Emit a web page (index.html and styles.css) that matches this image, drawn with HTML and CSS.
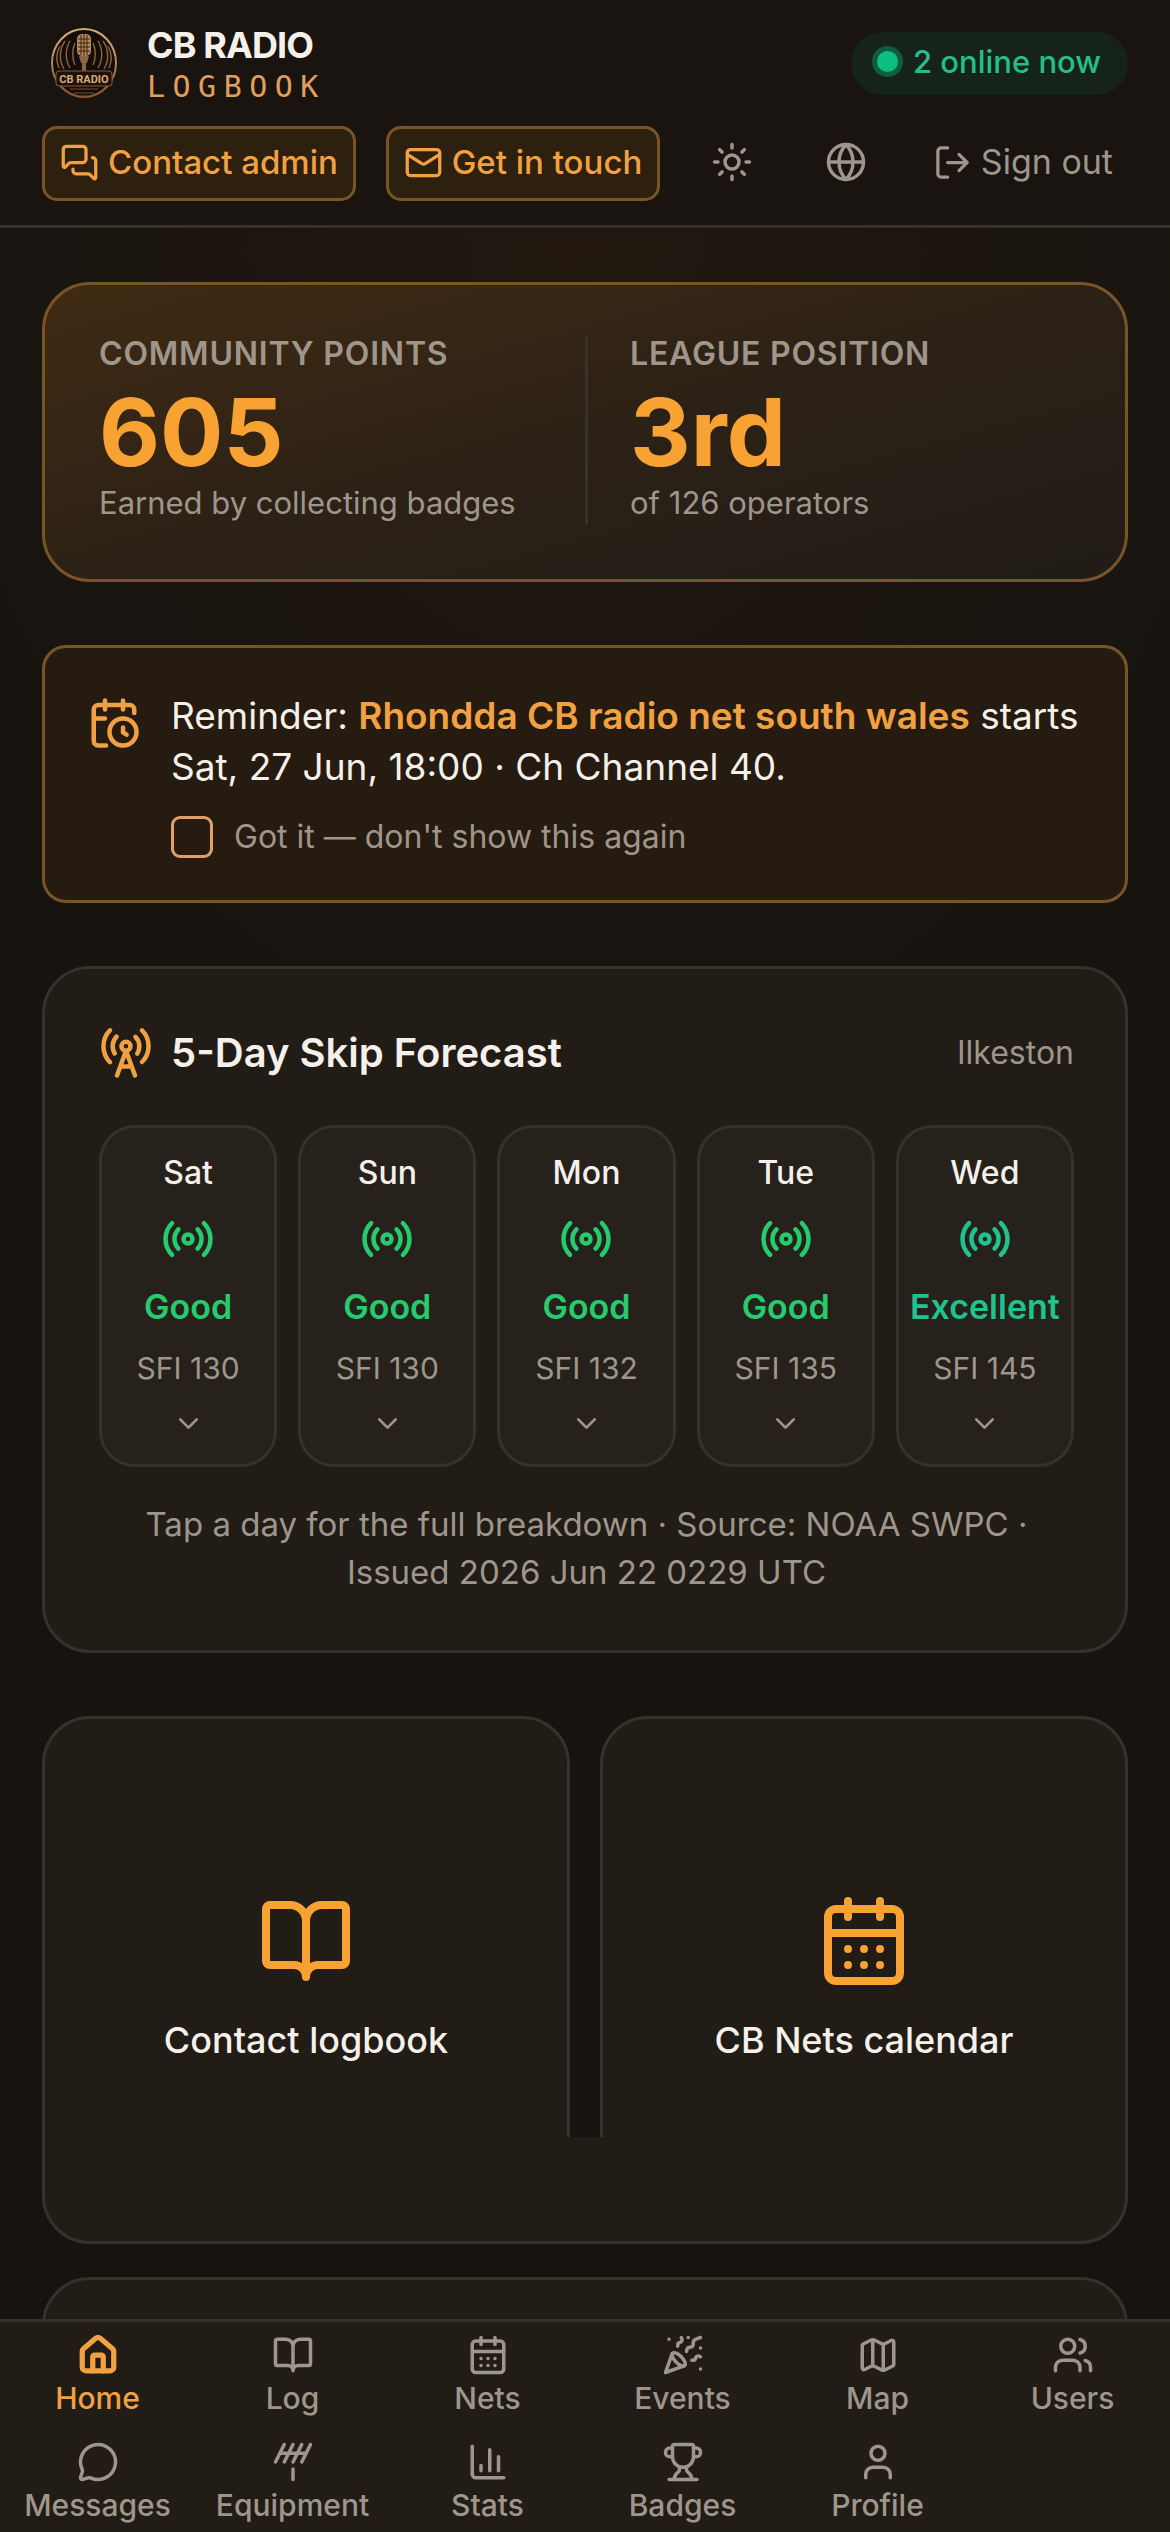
FILE: index.html
```html
<!DOCTYPE html>
<html lang="en">
<head>
    <meta charset="UTF-8">
    <meta name="viewport" content="width=device-width, initial-scale=1">
    <title>CB Radio Logbook</title>
    <link rel="stylesheet" href="styles.css">
</head>
<body>
<!-- icon set -->
<svg class="sprite" aria-hidden="true">
    <symbol id="i-chats" viewBox="0 0 24 24"><path d="M16 10a2 2 0 0 1-2 2H6.828a2 2 0 0 0-1.414.586l-2.202 2.202A.71.71 0 0 1 2 14.286V4a2 2 0 0 1 2-2h10a2 2 0 0 1 2 2z"/><path d="M20 9a2 2 0 0 1 2 2v10.286a.71.71 0 0 1-1.212.502l-2.202-2.202A2 2 0 0 0 17.172 19H10a2 2 0 0 1-2-2v-1"/></symbol>
    <symbol id="i-mail" viewBox="0 0 24 24"><rect x="2" y="4" width="20" height="16" rx="2"/><path d="m22 7-8.991 5.727a2 2 0 0 1-2.009 0L2 7"/></symbol>
    <symbol id="i-sun" viewBox="0 0 24 24"><circle cx="12" cy="12" r="4"/><path d="M12 2v2M12 20v2M4.93 4.93l1.41 1.41M17.66 17.66l1.41 1.41M2 12h2M20 12h2M6.34 17.66l-1.41 1.41M19.07 4.93l-1.41 1.41"/></symbol>
    <symbol id="i-globe" viewBox="0 0 24 24"><circle cx="12" cy="12" r="10"/><path d="M12 2a14.5 14.5 0 0 0 0 20 14.5 14.5 0 0 0 0-20M2 12h20"/></symbol>
    <symbol id="i-logout" viewBox="0 0 24 24"><path d="m16 17 5-5-5-5M21 12H9M9 21H5a2 2 0 0 1-2-2V5a2 2 0 0 1 2-2h4"/></symbol>
    <symbol id="i-reminder" viewBox="0 0 24 24"><path d="M16 14v2.2l1.6 1M16 2v4M21 7.5V6a2 2 0 0 0-2-2H5a2 2 0 0 0-2 2v14a2 2 0 0 0 2 2h3.5M3 10h5M8 2v4"/><circle cx="16" cy="16" r="6"/></symbol>
    <symbol id="i-tower" viewBox="0 0 24 24"><path d="M4.9 16.1C1 12.2 1 5.8 4.9 1.9M7.8 4.7a6.14 6.14 0 0 0-.8 7.5M16.2 4.8c2 2 2.26 5.11.8 7.47M19.1 1.9a9.96 9.96 0 0 1 0 14.1M9.5 18h5M8 22l4-11 4 11"/><circle cx="12" cy="9" r="2"/></symbol>
    <symbol id="i-signal" viewBox="0 0 24 24"><path d="M16.247 7.761a6 6 0 0 1 0 8.478M19.075 4.933a10 10 0 0 1 0 14.134M4.925 19.067a10 10 0 0 1 0-14.134M7.753 16.239a6 6 0 0 1 0-8.478"/><circle cx="12" cy="12" r="2"/></symbol>
    <symbol id="i-down" viewBox="0 0 24 24"><path d="m6 9 6 6 6-6"/></symbol>
    <symbol id="i-book" viewBox="0 0 24 24"><path d="M12 7v14M3 18a1 1 0 0 1-1-1V4a1 1 0 0 1 1-1h5a4 4 0 0 1 4 4 4 4 0 0 1 4-4h5a1 1 0 0 1 1 1v13a1 1 0 0 1-1 1h-6a3 3 0 0 0-3 3 3 3 0 0 0-3-3z"/></symbol>
    <symbol id="i-calendar" viewBox="0 0 24 24"><rect x="3" y="4" width="18" height="18" rx="2"/><path d="M8 2v4M16 2v4M3 10h18M8 14h.01M12 14h.01M16 14h.01M8 18h.01M12 18h.01M16 18h.01"/></symbol>
    <symbol id="i-home" viewBox="0 0 24 24"><path d="M15 21v-8a1 1 0 0 0-1-1h-4a1 1 0 0 0-1 1v8"/><path d="M3 10a2 2 0 0 1 .709-1.528l7-5.999a2 2 0 0 1 2.582 0l7 5.999A2 2 0 0 1 21 10v9a2 2 0 0 1-2 2H5a2 2 0 0 1-2-2z"/></symbol>
    <symbol id="i-party" viewBox="0 0 24 24"><path d="M5.8 11.3 2 22l10.7-3.79M4 3h.01M22 8h.01M15 2h.01M22 20h.01"/><path d="m22 2-2.24.75a2.9 2.9 0 0 0-1.96 3.12c.1.86-.57 1.63-1.45 1.63h-.38c-.86 0-1.6.6-1.76 1.44L14 10"/><path d="m22 13-.82-.33c-.86-.34-1.82.2-1.98 1.11c-.11.7-.72 1.22-1.43 1.22H17"/><path d="m11 2 .33.82c.34.86-.2 1.82-1.11 1.98C9.52 4.9 9 5.52 9 6.23V7"/><path d="M11 13c1.93 1.93 2.83 4.17 2 5-.83.83-3.07-.07-5-2-1.93-1.93-2.83-4.17-2-5 .83-.83 3.07.07 5 2Z"/></symbol>
    <symbol id="i-map" viewBox="0 0 24 24"><path d="M14.106 5.553a2 2 0 0 0 1.788 0l3.659-1.83A1 1 0 0 1 21 4.619v12.764a1 1 0 0 1-.553.894l-4.553 2.277a2 2 0 0 1-1.788 0l-4.212-2.106a2 2 0 0 0-1.788 0l-3.659 1.83A1 1 0 0 1 3 19.381V6.618a1 1 0 0 1 .553-.894l4.553-2.277a2 2 0 0 1 1.788 0zM15 5.764v15M9 3.236v15"/></symbol>
    <symbol id="i-users" viewBox="0 0 24 24"><path d="M16 21v-2a4 4 0 0 0-4-4H6a4 4 0 0 0-4 4v2M16 3.128a4 4 0 0 1 0 7.744M22 21v-2a4 4 0 0 0-3-3.87"/><circle cx="9" cy="7" r="4"/></symbol>
    <symbol id="i-message" viewBox="0 0 24 24"><path d="M2.992 16.342a2 2 0 0 1 .094 1.167l-1.065 3.29a1 1 0 0 0 1.236 1.168l3.413-.998a2 2 0 0 1 1.099.092 10 10 0 1 0-4.777-4.719"/></symbol>
    <symbol id="i-antenna" viewBox="0 0 24 24"><path d="M2 12 7 2M7 12l5-10M12 12l5-10M17 12l5-10M4.5 7h15M12 16v6"/></symbol>
    <symbol id="i-stats" viewBox="0 0 24 24"><path d="M3 3v16a2 2 0 0 0 2 2h16M18 17V9M13 17V5M8 17v-3"/></symbol>
    <symbol id="i-trophy" viewBox="0 0 24 24"><path d="M10 14.66v1.626a2 2 0 0 1-.976 1.696A5 5 0 0 0 7 21.978M14 14.66v1.626a2 2 0 0 0 .976 1.696A5 5 0 0 1 17 21.978M18 9h1.5a1 1 0 0 0 0-5H18M4 22h16M6 9a6 6 0 0 0 12 0V3a1 1 0 0 0-1-1H7a1 1 0 0 0-1 1zM6 9H4.5a1 1 0 0 1 0-5H6"/></symbol>
    <symbol id="i-user" viewBox="0 0 24 24"><path d="M19 21v-2a4 4 0 0 0-4-4H9a4 4 0 0 0-4 4v2"/><circle cx="12" cy="7" r="4"/></symbol>
</svg>

<div class="app">
    <header class="header">
        <div class="header-top">
            <a class="brand" href="#">
                <svg class="logo" viewBox="0 0 84 84" aria-hidden="true">
                    <defs>
                        <linearGradient id="copper" x1="0" y1="0" x2="0" y2="1">
                            <stop offset="0" stop-color="#d6b07c"/>
                            <stop offset="1" stop-color="#8a5636"/>
                        </linearGradient>
                    </defs>
                    <ellipse cx="42" cy="42" rx="32" ry="34" fill="#140e0a" stroke="url(#copper)" stroke-width="2"/>
                    <g fill="none" stroke="#8f6440" stroke-width="1.4">
                        <path d="M33 22c-3 6-3 16 0 22M28 20c-5 8-5 19 0 27M23 20c-6 8-6 20-1 28M18 25c-4 7-4 15-1 22"/>
                        <path d="M51 22c3 6 3 16 0 22M56 20c5 8 5 19 0 27M61 20c6 8 6 20 1 28M66 25c4 7 4 15 1 22"/>
                    </g>
                    <rect x="35" y="13" width="14" height="22" rx="5" fill="#b58a5e"/>
                    <path d="M36 18h12M36 22h12M36 26h12M36 30h12M39 14v20M42 13v22M45 14v20" stroke="#3a2415" stroke-width="1"/>
                    <path d="M37 35h10l-2 7h-1v8h-4v-8h-1z" fill="#8f6440"/>
                    <rect x="14" y="50" width="56" height="15" rx="3" fill="#1d120b" stroke="#8a5636"/>
                    <text class="logo-text" x="42" y="62">CB RADIO</text>
                    <path d="M28 68h28M32 72h20M39 75h6" stroke="#7d4c30" stroke-width="1.2"/>
                </svg>
                <span class="brand-name">
                    <span class="brand-title">CB RADIO</span>
                    <span class="brand-sub">LOGBOOK</span>
                </span>
            </a>
            <a class="online" href="#"><span class="dot"></span>2 online now</a>
        </div>
        <div class="header-actions">
            <button class="btn btn-outline" type="button"><svg class="icon"><use href="#i-chats"/></svg>Contact admin</button>
            <button class="btn btn-outline" type="button"><svg class="icon"><use href="#i-mail"/></svg>Get in touch</button>
            <button class="btn btn-icon" type="button" aria-label="Theme"><svg class="icon"><use href="#i-sun"/></svg></button>
            <button class="btn btn-icon" type="button" aria-label="Language"><svg class="icon"><use href="#i-globe"/></svg></button>
            <button class="btn" type="button"><svg class="icon"><use href="#i-logout"/></svg>Sign out</button>
        </div>
    </header>

    <main class="main">
        <section class="points">
            <div class="stat">
                <h2 class="stat-label">Community points</h2>
                <p class="stat-value">605</p>
                <p class="stat-note">Earned by collecting badges</p>
            </div>
            <div class="stat">
                <h2 class="stat-label">League position</h2>
                <p class="stat-value">3rd</p>
                <p class="stat-note">of 126 operators</p>
            </div>
        </section>

        <section class="reminder">
            <svg class="icon"><use href="#i-reminder"/></svg>
            <div class="reminder-body">
                <p class="reminder-text">Reminder: <strong>Rhondda CB radio net south wales</strong> starts Sat, 27 Jun, 18:00 · Ch Channel 40.</p>
                <label class="dismiss"><input type="checkbox"> Got it — don't show this again</label>
            </div>
        </section>

        <section class="card forecast">
            <div class="forecast-head">
                <svg class="icon"><use href="#i-tower"/></svg>
                <h2 class="forecast-title">5-Day Skip Forecast</h2>
                <span class="forecast-place">Ilkeston</span>
            </div>
            <div class="days">
                <button class="day good" type="button">
                    <span class="day-name">Sat</span>
                    <svg class="icon"><use href="#i-signal"/></svg>
                    <span class="day-rating">Good</span>
                    <span class="day-sfi">SFI 130</span>
                    <svg class="icon more"><use href="#i-down"/></svg>
                </button>
                <button class="day good" type="button">
                    <span class="day-name">Sun</span>
                    <svg class="icon"><use href="#i-signal"/></svg>
                    <span class="day-rating">Good</span>
                    <span class="day-sfi">SFI 130</span>
                    <svg class="icon more"><use href="#i-down"/></svg>
                </button>
                <button class="day good" type="button">
                    <span class="day-name">Mon</span>
                    <svg class="icon"><use href="#i-signal"/></svg>
                    <span class="day-rating">Good</span>
                    <span class="day-sfi">SFI 132</span>
                    <svg class="icon more"><use href="#i-down"/></svg>
                </button>
                <button class="day good" type="button">
                    <span class="day-name">Tue</span>
                    <svg class="icon"><use href="#i-signal"/></svg>
                    <span class="day-rating">Good</span>
                    <span class="day-sfi">SFI 135</span>
                    <svg class="icon more"><use href="#i-down"/></svg>
                </button>
                <button class="day excellent" type="button">
                    <span class="day-name">Wed</span>
                    <svg class="icon"><use href="#i-signal"/></svg>
                    <span class="day-rating">Excellent</span>
                    <span class="day-sfi">SFI 145</span>
                    <svg class="icon more"><use href="#i-down"/></svg>
                </button>
            </div>
            <p class="forecast-note">Tap a day for the full breakdown · Source: NOAA SWPC · Issued 2026 Jun 22 0229 UTC</p>
        </section>

        <div class="tiles">
            <div class="tile-row">
                <a class="card tile" href="#"><svg class="icon"><use href="#i-book"/></svg>Contact logbook</a>
                <a class="card tile" href="#"><svg class="icon"><use href="#i-calendar"/></svg>CB Nets calendar</a>
            </div>
            <div class="card tile-wide"></div>
        </div>
    </main>

    <nav class="nav">
        <a class="selected" href="#"><svg class="icon"><use href="#i-home"/></svg>Home</a>
        <a href="#"><svg class="icon"><use href="#i-book"/></svg>Log</a>
        <a href="#"><svg class="icon"><use href="#i-calendar"/></svg>Nets</a>
        <a href="#"><svg class="icon"><use href="#i-party"/></svg>Events</a>
        <a href="#"><svg class="icon"><use href="#i-map"/></svg>Map</a>
        <a href="#"><svg class="icon"><use href="#i-users"/></svg>Users</a>
        <a href="#"><svg class="icon"><use href="#i-message"/></svg>Messages</a>
        <a href="#"><svg class="icon"><use href="#i-antenna"/></svg>Equipment</a>
        <a href="#"><svg class="icon"><use href="#i-stats"/></svg>Stats</a>
        <a href="#"><svg class="icon"><use href="#i-trophy"/></svg>Badges</a>
        <a href="#"><svg class="icon"><use href="#i-user"/></svg>Profile</a>
    </nav>
</div>
</body>
</html>
```

FILE: styles.css
```css
*{
    margin: 0;
    padding: 0;
    box-sizing: border-box;
}
:root{
    --bg: #17140f;
    --card: #211c16;
    --line: #36312b;
    --text: #f5f0e9;
    --muted: #9f968b;
    --amber: #f7a232;
    --amber-soft: #f2a142;
    --amber-line: #7a5429;
}
body{
    background: var(--bg);
    color: var(--text);
    font-family: Inter, Roboto, sans-serif;
    font-size: 33px;
    line-height: 48px;
}
a{
    color: inherit;
    text-decoration: none;
}
button{
    background: none;
    border: 0;
    color: inherit;
    font: inherit;
    cursor: pointer;
}
.sprite{
    display: none;
}
.icon{
    flex: none;
    width: 54px;
    height: 54px;
    fill: none;
    stroke: currentColor;
    stroke-width: 2;
    stroke-linecap: round;
    stroke-linejoin: round;
}
.app{
    display: flex;
    flex-direction: column;
    height: 100vh;
}

/* header */
.header{
    padding: 21px 42px 24px;
    background: #19140f;
    border-bottom: 3px solid var(--line);
}
.header-top,
.header-actions,
.brand,
.online,
.btn{
    display: flex;
    align-items: center;
}
.header-top,
.header-actions{
    justify-content: space-between;
}
.header-actions{
    margin-top: 21px;
}
.brand{
    gap: 21px;
}
.logo{
    width: 84px;
    height: 84px;
}
.logo-text{
    fill: #d9a878;
    font: bold 11px Roboto, sans-serif;
    text-anchor: middle;
}
.brand-title,
.brand-sub{
    display: block;
}
.brand-title{
    font-size: 36px;
    line-height: 48px;
    font-weight: 700;
    letter-spacing: -0.025em;
}
.brand-sub{
    color: #e09f5a;
    font-family: "DejaVu Sans Mono", monospace;
    font-size: 30px;
    line-height: 36px;
    letter-spacing: 0.25em;
}
.online{
    height: 63px;
    padding: 0 27px 3px 21px;
    gap: 10px;
    border-radius: 32px;
    background: #16231a;
    color: #25be88;
    font-size: 31px;
    font-weight: 500;
}
.dot{
    width: 21px;
    height: 21px;
    margin: 0 5px;
    border-radius: 50%;
    background: #0abf80;
    box-shadow: 0 0 0 5px #115c40;
}
.btn{
    justify-content: center;
    height: 75px;
    gap: 9px;
    padding: 0 15px 3px;
    border-radius: 15px;
    color: var(--muted);
    font-size: 34px;
    white-space: nowrap;
}
.btn .icon{
    width: 39px;
    height: 39px;
}
.btn-outline{
    border: 3px solid var(--amber-line);
    background: #2e200f;
    color: var(--amber-soft);
    font-size: 33px;
    font-weight: 500;
}
.btn-icon{
    width: 84px;
}
.btn-icon .icon{
    width: 42px;
    height: 42px;
}

/* content */
.main{
    flex: 1;
    display: flex;
    flex-direction: column;
    gap: 63px;
    min-height: 0;
    padding: 54px 42px;
    overflow-y: auto;
    scrollbar-width: none;
    background: radial-gradient(ellipse 60% 900px at 50% 0, #21170f, var(--bg));
}
.main > *{
    flex: none;
}
.card{
    border: 3px solid var(--line);
    border-radius: 48px;
    background: var(--card);
}
.points{
    display: grid;
    grid-template-columns: 1fr 1fr;
    padding: 51px 54px 54px;
    border: 3px solid var(--amber-line);
    border-radius: 48px;
    background: linear-gradient(to bottom right, #402b13, #2c2116 50%, #211c17);
}
.stat + .stat{
    padding-left: 42px;
    border-left: 3px solid var(--line);
}
.stat-label{
    margin-bottom: 12px;
    color: var(--muted);
    font-size: 32px;
    line-height: 36px;
    font-weight: 600;
    letter-spacing: 0.025em;
    text-transform: uppercase;
}
.stat-value{
    color: var(--amber);
    font-size: 94px;
    line-height: 96px;
    font-weight: 700;
}
.stat-note{
    color: var(--muted);
    font-size: 31px;
    line-height: 45px;
}
.reminder{
    display: flex;
    gap: 30px;
    padding: 42px;
    border: 3px solid var(--amber-line);
    border-radius: 24px;
    background: #261b10;
}
.reminder .icon{
    margin-top: 6px;
    color: var(--amber-soft);
}
.reminder-text{
    font-size: 37px;
    line-height: 51px;
}
.reminder-text strong{
    color: var(--amber-soft);
    font-weight: 600;
}
.dismiss{
    display: flex;
    align-items: center;
    gap: 21px;
    margin-top: 24px;
    color: var(--muted);
    font-size: 32px;
    line-height: 42px;
}
.dismiss input{
    appearance: none;
    width: 42px;
    height: 42px;
    border: 3px solid #e2a066;
    border-radius: 9px;
}
.dismiss input:checked{
    background: var(--amber);
}

/* forecast */
.forecast{
    padding: 54px 51px 54px 54px;
}
.forecast-head{
    display: flex;
    align-items: center;
    gap: 18px;
    height: 60px;
    margin-bottom: 42px;
}
.forecast-head .icon{
    color: var(--amber-soft);
}
.forecast-title{
    flex: 1;
    font-size: 40px;
    font-weight: 600;
}
.forecast-place{
    color: var(--muted);
    font-size: 32px;
}
.days{
    display: grid;
    grid-template-columns: repeat(5, 1fr);
    gap: 21px;
}
.day{
    display: flex;
    flex-direction: column;
    align-items: center;
    gap: 18px;
    min-width: 0;
    padding: 24px 0;
    border: 3px solid var(--line);
    border-radius: 36px;
    background: #26211b;
    font-size: 30px;
    line-height: 42px;
}
.day-name{
    font-size: 32px;
    font-weight: 500;
}
.day-rating{
    font-size: 34px;
    line-height: 45px;
    font-weight: 600;
}
.good{
    color: #26cb6e;
}
.excellent{
    color: #20c28e;
}
.day .day-name{
    color: var(--text);
}
.day .day-sfi,
.day .more{
    color: var(--muted);
}
.day .more{
    width: 33px;
    height: 33px;
}
.forecast-note{
    margin-top: 33px;
    color: var(--muted);
    text-align: center;
}

/* tiles */
.tile-row{
    position: relative;
    display: grid;
    grid-template-columns: 1fr 1fr;
    gap: 30px;
    margin-bottom: 33px;
}
.tile{
    display: flex;
    flex-direction: column;
    align-items: center;
    justify-content: center;
    gap: 24px;
    aspect-ratio: 1;
    font-size: 36px;
    line-height: 54px;
    font-weight: 500;
}
.tile .icon{
    width: 96px;
    height: 96px;
    color: var(--amber);
}
/* joins the two tiles along their foot */
.tile-row::after{
    content: "";
    position: absolute;
    left: 48px;
    right: 48px;
    bottom: 0;
    height: 104px;
    border-bottom: 3px solid var(--line);
    background: var(--card);
}
.tile-wide{
    height: 528px;
}

/* bottom nav */
.nav{
    display: grid;
    grid-template-columns: repeat(6, 1fr);
    row-gap: 20px;
    padding: 12px 0 4px;
    border-top: 3px solid var(--line);
    background: var(--card);
}
.nav a{
    display: flex;
    flex-direction: column;
    align-items: center;
    color: var(--muted);
    font-size: 30px;
    line-height: 45px;
    font-weight: 500;
}
.nav .icon{
    width: 42px;
    height: 42px;
}
.nav a.selected{
    color: var(--amber-soft);
}
.nav .selected .icon{
    stroke-width: 3;
}
```
